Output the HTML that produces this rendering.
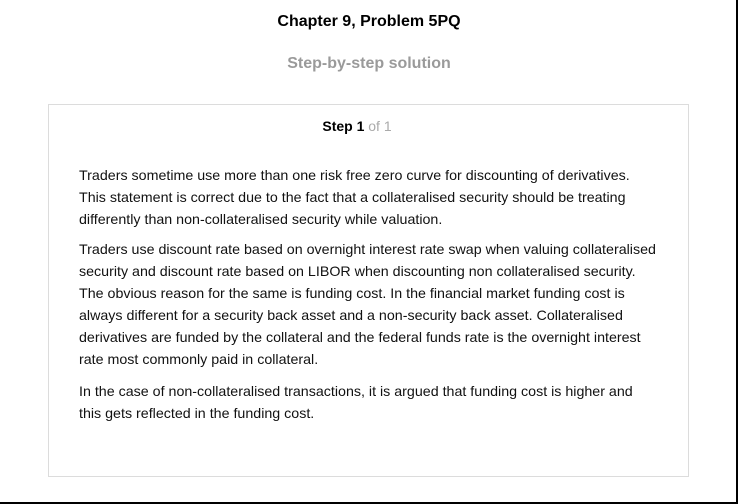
<!DOCTYPE html>
<html><head><style>
html,body{margin:0;padding:0}
body{width:736px;height:502px;border-right:2px solid #000;border-bottom:2px solid #000;background:#fff;font-family:"Liberation Sans",Arial,sans-serif;position:relative;overflow:hidden}
.t{position:absolute;left:0;width:738px;text-align:center;font-weight:bold}
.box{position:absolute;left:48px;top:104px;width:639px;height:371px;border:1px solid #dcdcdc}
.p{position:absolute;left:79px;width:610px;font-size:14.25px;line-height:22px;color:#111}
</style></head><body>
<div class="t" style="top:13px;font-size:16px;color:#000">Chapter 9, Problem 5PQ</div>
<div class="t" style="top:55px;font-size:16px;color:#9a9a9a">Step-by-step solution</div>
<div class="box"></div>
<div class="t" style="top:118px;left:-12px;font-size:14px;color:#000">Step 1 <span style="font-weight:normal;color:#aaa">of 1</span></div>
<div class="p" style="top:165px">Traders sometime use more than one risk free zero curve for discounting of derivatives.<br>This statement is correct due to the fact that a collateralised security should be treating<br>differently than non-collateralised security while valuation.</div>
<div class="p" style="top:239px">Traders use discount rate based on overnight interest rate swap when valuing collateralised<br>security and discount rate based on LIBOR when discounting non collateralised security.<br>The obvious reason for the same is funding cost. In the financial market funding cost is<br>always different for a security back asset and a non-security back asset. Collateralised<br>derivatives are funded by the collateral and the federal funds rate is the overnight interest<br>rate most commonly paid in collateral.</div>
<div class="p" style="top:381px">In the case of non-collateralised transactions, it is argued that funding cost is higher and<br>this gets reflected in the funding cost.</div>
</body></html>
